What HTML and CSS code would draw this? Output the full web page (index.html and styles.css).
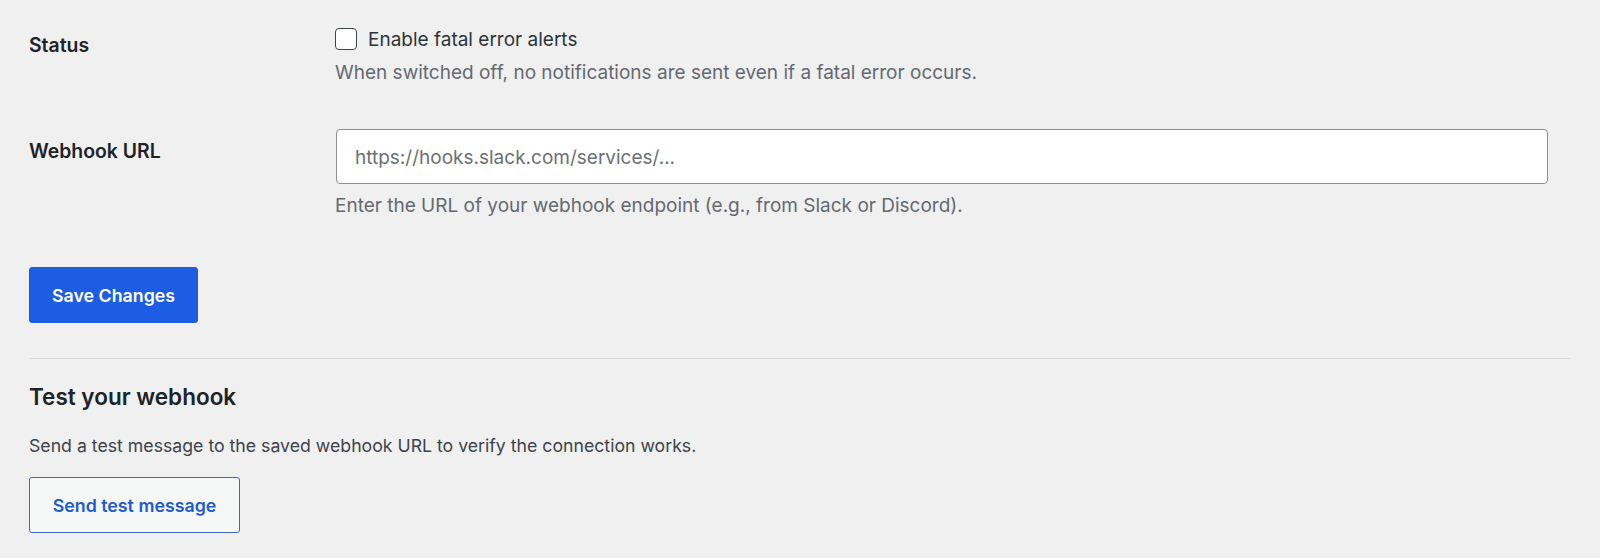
FILE: index.html
```html
<!DOCTYPE html>
<html lang="en">
<head>
<meta charset="utf-8">
<title>Webhook settings</title>
<link rel="stylesheet" href="styles.css">
</head>
<body>
<main class="wrap">
  <form class="settings">
    <div class="row row-status">
      <div class="row-label">Status</div>
      <div class="row-field">
        <label class="check">
          <input type="checkbox" class="check-box">
          <span class="check-text">Enable fatal error alerts</span>
        </label>
        <p class="desc desc-status">When switched off, no notifications are sent even if a fatal error occurs.</p>
      </div>
    </div>
    <div class="row row-url">
      <div class="row-label label-url">Webhook URL</div>
      <div class="row-field">
        <input type="text" class="url-input" placeholder="https://hooks.slack.com/services/...">
        <p class="desc desc-url">Enter the URL of your webhook endpoint (e.g., from Slack or Discord).</p>
      </div>
    </div>
    <div class="actions">
      <button type="button" class="btn btn-primary">Save Changes</button>
    </div>
  </form>
  <hr class="divider">
  <section class="test">
    <h2 class="test-title">Test your webhook</h2>
    <p class="test-text">Send a test message to the saved webhook URL to verify the connection works.</p>
    <button type="button" class="btn btn-secondary">Send test message</button>
  </section>
</main>
</body>
</html>
```

FILE: styles.css
```css
* { box-sizing: border-box; }

html, body {
  margin: 0;
  background: #f0f0f1;
}

body {
  font-family: Inter, "Liberation Sans", Arial, sans-serif;
  font-size: 19px;
  color: #1d2327;
}

.wrap {
  padding: 28px 29px 0 29px;
}

.row {
  display: grid;
  grid-template-columns: 306px 1fr;
  align-items: start;
}

.row-label {
  font-weight: 600;
  font-size: 19.4px;
  line-height: 24px;
  padding-top: 5px;
  padding-left: 0;
  color: #1d2327;
}

.label-url {
  padding-top: 10px;
}

.row-url {
  margin-top: 43px;
}

.check {
  display: flex;
  align-items: center;
  gap: 11px;
  height: 22px;
}

.check-box {
  appearance: none;
  -webkit-appearance: none;
  margin: 0;
  width: 22px;
  height: 22px;
  border: 1.5px solid #3c434a;
  border-radius: 4px;
  background: #fff;
}

.check-text {
  color: #2c3338;
  font-size: 19px;
  line-height: 24px;
  padding-top: 2px;
}

.desc {
  margin: 9px 0 0 0;
  color: #646970;
  font-size: 19px;
  line-height: 26px;
}

.desc-status {
  margin-top: 10px;
}

.url-input {
  display: block;
  width: calc(100% - 24px);
  height: 55px;
  margin-left: 1px;
  padding: 1px 18px 0 18px;
  border: 1.5px solid #8c8f94;
  border-radius: 4px;
  background: #fff;
  font-family: inherit;
  font-size: 19px;
  color: #2c3338;
}

.url-input::placeholder {
  color: #6b7075;
}

.desc-url {
  margin-top: 9px;
}

.actions {
  margin-top: 48px;
}

.btn {
  display: inline-flex;
  align-items: center;
  justify-content: center;
  height: 56px;
  border-radius: 3px;
  font-family: inherit;
  font-size: 17.8px;
  font-weight: 600;
  cursor: pointer;
}

.btn-primary {
  width: 169px;
  background: #1d5de3;
  border: 1px solid #1d5de3;
  color: #fff;
}

.btn-secondary {
  width: 211px;
  background: #f6f7f7;
  border: 1.5px solid #3a68c6;
  color: #1f5bc9;
}

.divider {
  margin: 35px 0 0 0;
  border: 0;
  border-top: 1.5px solid #dcdcde;
}

.test-title {
  margin: 23px 0 0 0;
  font-size: 22.5px;
  line-height: 30px;
  font-weight: 600;
  color: #1d2327;
}

.test-text {
  margin: 21px 0 18px 0;
  font-size: 17.7px;
  line-height: 26px;
  color: #3c434a;
}
```
